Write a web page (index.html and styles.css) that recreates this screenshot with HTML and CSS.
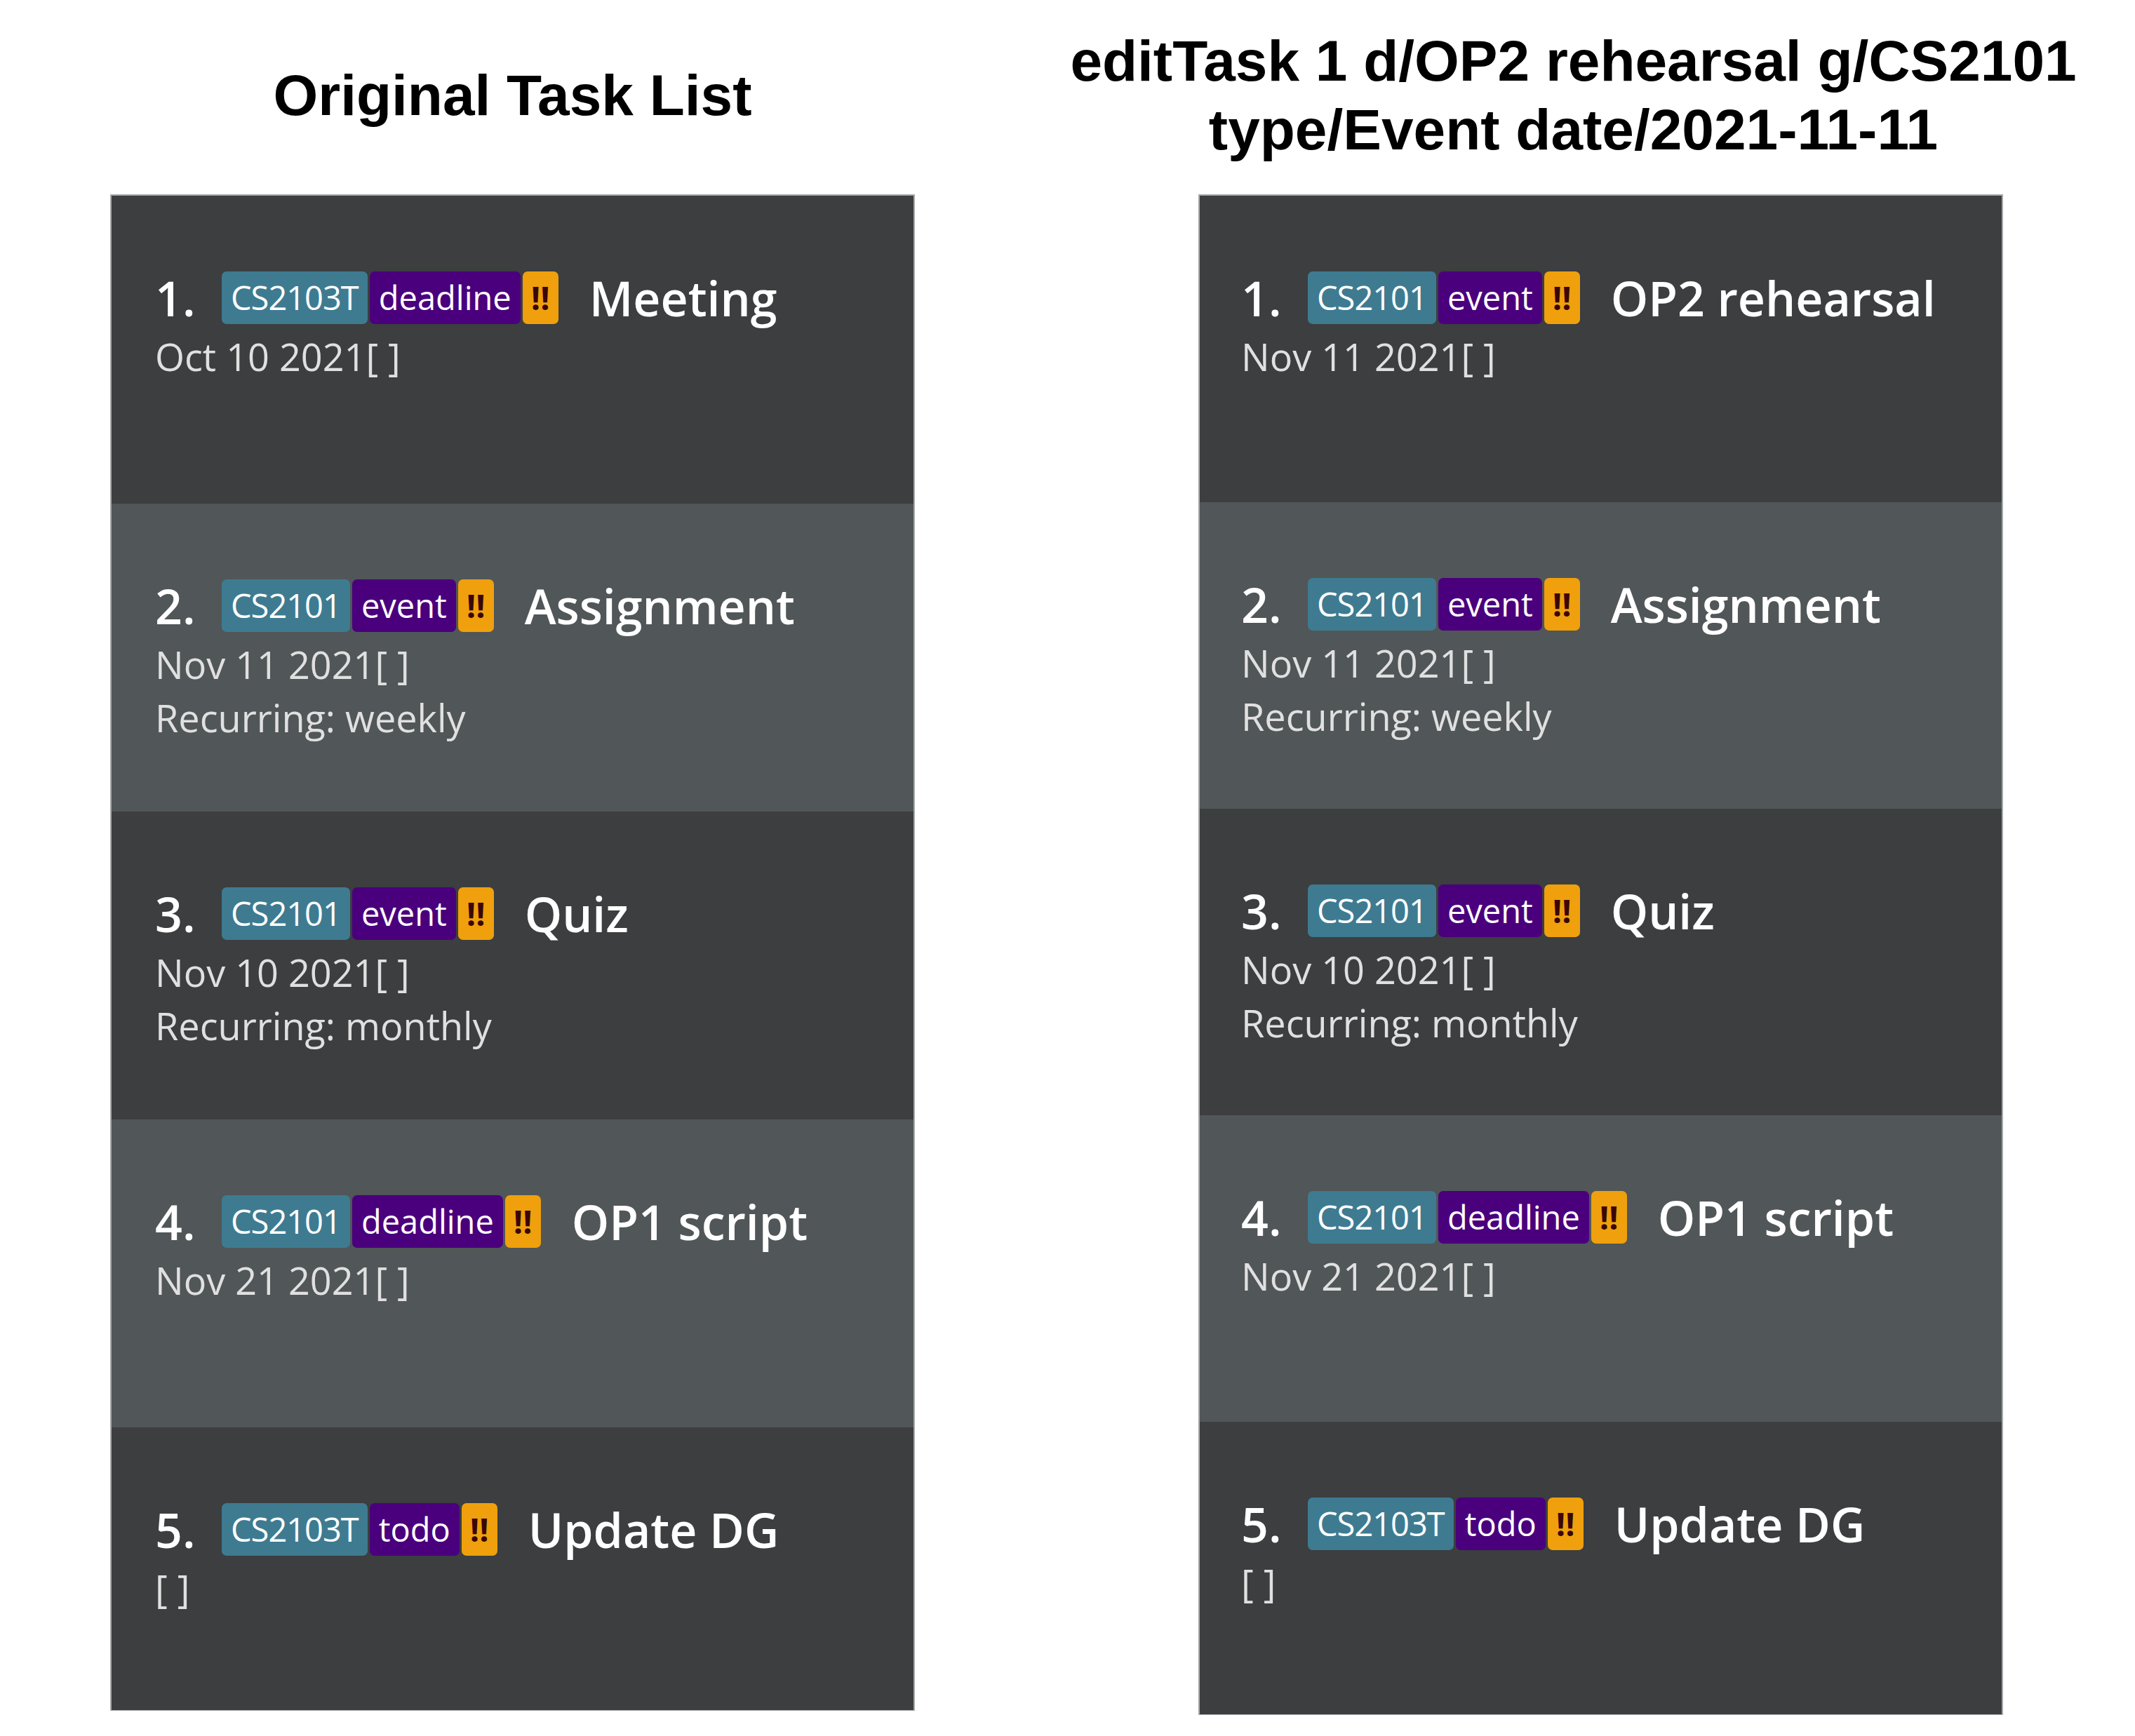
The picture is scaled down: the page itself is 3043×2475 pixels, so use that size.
FILE: index.html
```html
<!DOCTYPE html>
<html lang="en">
<head>
<meta charset="utf-8">
<title>editTask comparison</title>
<link rel="stylesheet" href="styles.css">
</head>
<body>
<div class="page">
  <section class="column">
    <div class="header">
      <h1 class="title">Original Task List</h1>
    </div>
    <div class="panel panel-left">
      <div class="row">
        <div class="line">
          <span class="index">1.</span>
          <span class="tags"><span class="tag tag-mod">CS2103T</span><span class="tag tag-type">deadline</span><span class="tag tag-pri">!!</span></span>
          <span class="name">Meeting</span>
        </div>
        <div class="detail">Oct 10 2021[ ]</div>
      </div>
      <div class="row">
        <div class="line">
          <span class="index">2.</span>
          <span class="tags"><span class="tag tag-mod">CS2101</span><span class="tag tag-type">event</span><span class="tag tag-pri">!!</span></span>
          <span class="name">Assignment</span>
        </div>
        <div class="detail">Nov 11 2021[ ]</div>
        <div class="detail">Recurring: weekly</div>
      </div>
      <div class="row">
        <div class="line">
          <span class="index">3.</span>
          <span class="tags"><span class="tag tag-mod">CS2101</span><span class="tag tag-type">event</span><span class="tag tag-pri">!!</span></span>
          <span class="name">Quiz</span>
        </div>
        <div class="detail">Nov 10 2021[ ]</div>
        <div class="detail">Recurring: monthly</div>
      </div>
      <div class="row">
        <div class="line">
          <span class="index">4.</span>
          <span class="tags"><span class="tag tag-mod">CS2101</span><span class="tag tag-type">deadline</span><span class="tag tag-pri">!!</span></span>
          <span class="name">OP1 script</span>
        </div>
        <div class="detail">Nov 21 2021[ ]</div>
      </div>
      <div class="row">
        <div class="line">
          <span class="index">5.</span>
          <span class="tags"><span class="tag tag-mod">CS2103T</span><span class="tag tag-type">todo</span><span class="tag tag-pri">!!</span></span>
          <span class="name">Update DG</span>
        </div>
        <div class="detail">[ ]</div>
      </div>
    </div>
  </section>

  <section class="column">
    <div class="header header-wide">
      <h1 class="title">editTask 1 d/OP2 rehearsal g/CS2101<br>type/Event date/2021-11-11</h1>
    </div>
    <div class="panel panel-right">
      <div class="row">
        <div class="line">
          <span class="index">1.</span>
          <span class="tags"><span class="tag tag-mod">CS2101</span><span class="tag tag-type">event</span><span class="tag tag-pri">!!</span></span>
          <span class="name">OP2 rehearsal</span>
        </div>
        <div class="detail">Nov 11 2021[ ]</div>
      </div>
      <div class="row">
        <div class="line">
          <span class="index">2.</span>
          <span class="tags"><span class="tag tag-mod">CS2101</span><span class="tag tag-type">event</span><span class="tag tag-pri">!!</span></span>
          <span class="name">Assignment</span>
        </div>
        <div class="detail">Nov 11 2021[ ]</div>
        <div class="detail">Recurring: weekly</div>
      </div>
      <div class="row">
        <div class="line">
          <span class="index">3.</span>
          <span class="tags"><span class="tag tag-mod">CS2101</span><span class="tag tag-type">event</span><span class="tag tag-pri">!!</span></span>
          <span class="name">Quiz</span>
        </div>
        <div class="detail">Nov 10 2021[ ]</div>
        <div class="detail">Recurring: monthly</div>
      </div>
      <div class="row">
        <div class="line">
          <span class="index">4.</span>
          <span class="tags"><span class="tag tag-mod">CS2101</span><span class="tag tag-type">deadline</span><span class="tag tag-pri">!!</span></span>
          <span class="name">OP1 script</span>
        </div>
        <div class="detail">Nov 21 2021[ ]</div>
      </div>
      <div class="row">
        <div class="line">
          <span class="index">5.</span>
          <span class="tags"><span class="tag tag-mod">CS2103T</span><span class="tag tag-type">todo</span><span class="tag tag-pri">!!</span></span>
          <span class="name">Update DG</span>
        </div>
        <div class="detail">[ ]</div>
      </div>
    </div>
  </section>
</div>
</body>
</html>
```

FILE: styles.css
```css
html, body {
  margin: 0;
  padding: 0;
  background: #ffffff;
}

.page {
  display: grid;
  grid-template-columns: 1147px 1147px;
  column-gap: 404px;
  padding-left: 157px;
  align-items: start;
}

.column {
  display: flex;
  flex-direction: column;
}

.header {
  box-sizing: border-box;
  height: 277px;
  padding-bottom: 5px;
  display: flex;
  align-items: center;
  justify-content: center;
}

.header-wide {
  margin: 0 -160px 0 -238px;
}

.title {
  margin: 0;
  font-family: "Liberation Sans", Arial, sans-serif;
  font-weight: 700;
  font-size: 82px;
  line-height: 98px;
  color: #000000;
  text-align: center;
  white-space: nowrap;
}

.panel {
  box-sizing: border-box;
  border: 2px solid #a6a8a9;
  border-bottom-width: 1px;
  overflow: hidden;
  display: flex;
  flex-direction: column;
  font-family: "Open Sans", "Noto Sans", sans-serif;
}

.panel-left {
  height: 2162px;
}

.panel-right {
  height: 2168px;
}

.row {
  flex: none;
  box-sizing: border-box;
  height: 439px;
  padding: 108px 0 0 62px;
  background: #3c3e3f;
}

.panel-right .row {
  height: 437px;
  padding-left: 59px;
}

.row:nth-child(even) {
  background: #515658;
}

.line {
  display: flex;
  align-items: center;
  height: 75px;
  margin-bottom: 8px;
}

.index {
  flex: none;
  width: 95px;
  font-size: 68px;
  font-weight: 600;
  color: #ffffff;
  line-height: 1;
}

.tags {
  display: flex;
  gap: 3px;
  align-items: center;
}

.tag {
  display: flex;
  align-items: center;
  height: 75px;
  padding: 0 13px;
  border-radius: 7px;
  font-size: 47px;
  color: #ffffff;
  line-height: 1;
}

.tag-mod {
  background: #3e7b91;
  letter-spacing: -1px;
}

.tag-type {
  background: #4a007d;
}

.tag-pri {
  background: #efa00c;
  color: #3a0707;
  font-weight: 700;
  padding: 0 12px;
}

.name {
  margin-left: 44px;
  font-size: 68px;
  font-weight: 600;
  color: #ffffff;
  line-height: 1;
  white-space: nowrap;
}

.detail {
  font-size: 54px;
  line-height: 76px;
  color: #e0e0e0;
  white-space: nowrap;
}
```
